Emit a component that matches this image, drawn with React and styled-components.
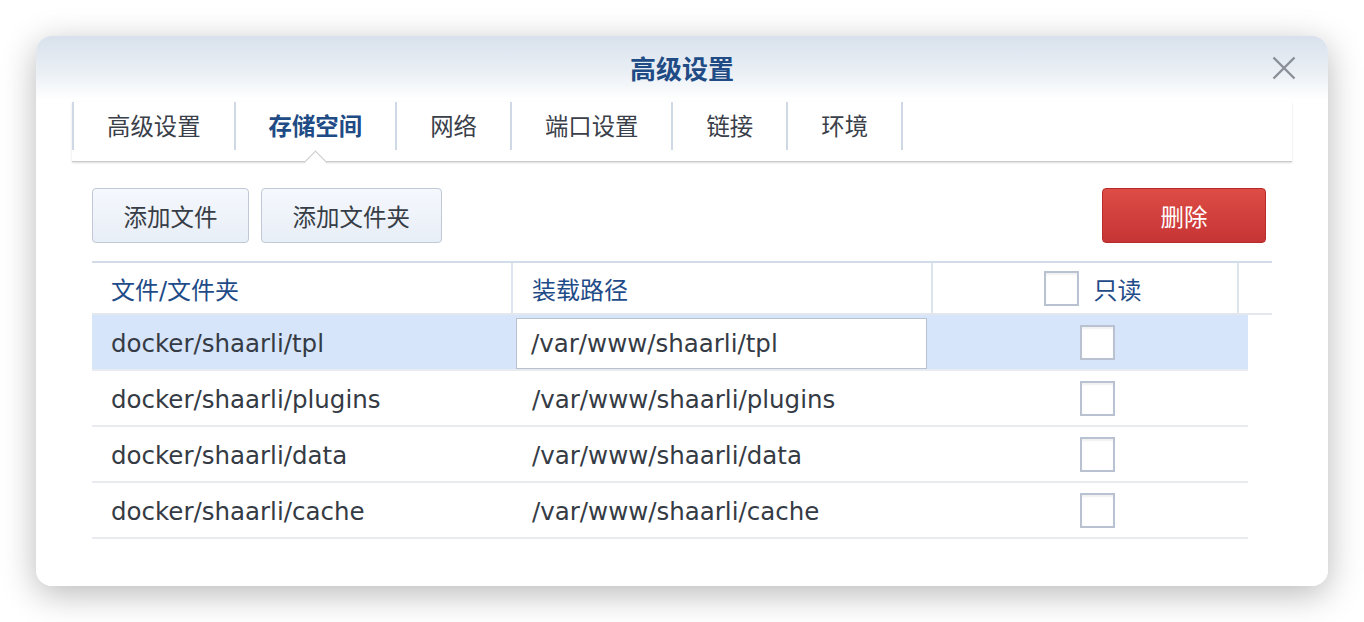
import React, { useState } from "react";
import styled, { createGlobalStyle } from "styled-components";

const tabs = ["高级设置", "存储空间", "网络", "端口设置", "链接", "环境"];

const rows = [
  { file: "docker/shaarli/tpl", mount: "/var/www/shaarli/tpl" },
  { file: "docker/shaarli/plugins", mount: "/var/www/shaarli/plugins" },
  { file: "docker/shaarli/data", mount: "/var/www/shaarli/data" },
  { file: "docker/shaarli/cache", mount: "/var/www/shaarli/cache" },
];

const App = () => {
  const [activeTab, setActiveTab] = useState(1);
  const [selected, setSelected] = useState(0);

  return (
    <Page>
      <GlobalStyle />
      <Dialog>
        <Header>
          <span />
          <Title>高级设置</Title>
          <CloseButton aria-label="close">
            <svg width="24" height="24" viewBox="0 0 24 24">
              <path
                d="M1.5 1.5 L22.5 22.5 M22.5 1.5 L1.5 22.5"
                stroke="#8a8f97"
                strokeWidth="2.4"
                fill="none"
              />
            </svg>
          </CloseButton>
        </Header>

        <TabBar>
          {tabs.map((tab, index) => (
            <Tab
              key={tab}
              $active={index === activeTab}
              $first={index === 0}
              onClick={() => setActiveTab(index)}
            >
              {tab}
            </Tab>
          ))}
        </TabBar>

        <Content>
          <Toolbar>
            <Button>添加文件</Button>
            <Button>添加文件夹</Button>
            <Spacer />
            <DangerButton>删除</DangerButton>
          </Toolbar>

          <Table>
            <HeadRow>
              <HeadCell>文件/文件夹</HeadCell>
              <HeadCell>装载路径</HeadCell>
              <HeadCell $center>
                <Checkbox />
                只读
              </HeadCell>
              <HeadCell $last />
            </HeadRow>

            {rows.map((row, index) => (
              <Row
                key={row.file}
                $selected={index === selected}
                onClick={() => setSelected(index)}
              >
                <Cell>{row.file}</Cell>
                {index === selected ? (
                  <EditCell>
                    <PathInput>{row.mount}</PathInput>
                  </EditCell>
                ) : (
                  <Cell>{row.mount}</Cell>
                )}
                <CheckCell>
                  <Checkbox />
                </CheckCell>
              </Row>
            ))}
          </Table>
        </Content>
      </Dialog>
    </Page>
  );
};

export default App;

// 스타일
const GlobalStyle = createGlobalStyle`
  html, body {
    margin: 0;
    background: #ffffff;
  }
  body {
    font-family: "DejaVu Sans", "Noto Sans CJK SC", sans-serif;
  }
`;

const Page = styled.div`
  padding: 36px;
`;

const Dialog = styled.div`
  width: 1292px;
  height: 550px;
  box-sizing: border-box;
  border-radius: 16px;
  background: linear-gradient(
    180deg,
    #d8e1ec 0px,
    #eaeff5 36px,
    #ffffff 64px,
    #ffffff 100%
  );
  box-shadow: 0 8px 34px rgba(0, 0, 0, 0.28);
  display: flex;
  flex-direction: column;
`;

const Header = styled.div`
  height: 66px;
  display: grid;
  grid-template-columns: 1fr auto 1fr;
  align-items: center;
`;

const Title = styled.div`
  font-family: "Noto Sans CJK SC", sans-serif;
  font-size: 26px;
  font-weight: bold;
  color: #214b85;
  margin-top: -4px;
`;

const CloseButton = styled.button`
  justify-self: end;
  margin-right: 32px;
  margin-top: -2px;
  width: 24px;
  height: 24px;
  padding: 0;
  border: none;
  background: none;
  display: flex;
  cursor: pointer;
`;

const TabBar = styled.div`
  margin: 0 36px;
  height: 60px;
  box-sizing: border-box;
  padding-bottom: 12px;
  display: flex;
  border-bottom: 1px solid #c9c9c9;
  box-shadow: 0 1px 2px rgba(0, 0, 0, 0.14);
`;

const Tab = styled.div`
  position: relative;
  height: 48px;
  padding: 0 33px 2px;
  box-sizing: border-box;
  display: flex;
  align-items: center;
  font-family: "Noto Sans CJK SC", sans-serif;
  font-size: 23.4px;
  color: ${({ $active }) => ($active ? "#214b85" : "#3a4049")};
  font-weight: ${({ $active }) => ($active ? "bold" : "normal")};
  border-right: 2px solid #cfd9e6;
  border-left: ${({ $first }) => ($first ? "2px solid #cfd9e6" : "none")};
  cursor: pointer;

  ${({ $active }) =>
    $active &&
    `
    &::after {
      content: "";
      position: absolute;
      left: 50%;
      bottom: -21px;
      width: 16px;
      height: 16px;
      margin-left: -8px;
      background: #ffffff;
      border-top: 1px solid #c9c9c9;
      border-left: 1px solid #c9c9c9;
      transform: rotate(45deg);
    }
  `}
`;

const Content = styled.div`
  padding: 26px 56px 0 56px;
`;

const Toolbar = styled.div`
  display: flex;
  gap: 12px;
  padding-right: 6px;
`;

const Spacer = styled.div`
  flex: 1;
`;

const Button = styled.button`
  height: 55px;
  padding: 0 30.5px;
  border: 1px solid #bfc8d4;
  border-radius: 4px;
  background: linear-gradient(180deg, #f5f8fd 0%, #e8eef7 100%);
  font-family: "Noto Sans CJK SC", sans-serif;
  font-size: 23.5px;
  color: #373d46;
  cursor: pointer;
`;

const DangerButton = styled(Button)`
  min-width: 164px;
  border-color: #b82b2b;
  background: linear-gradient(180deg, #de4c46 0%, #c63535 100%);
  color: #ffffff;
`;

const Table = styled.div`
  margin-top: 18px;
`;

const HeadRow = styled.div`
  display: grid;
  grid-template-columns: 421px 420px 306px 1fr;
  height: 54px;
  box-sizing: border-box;
  border-top: 2px solid #d2dbe8;
  border-bottom: 2px solid #e3e8ee;
`;

const HeadCell = styled.div`
  display: flex;
  align-items: center;
  justify-content: ${({ $center }) => ($center ? "center" : "flex-start")};
  gap: 15px;
  padding-left: ${({ $center }) => ($center ? "15px" : "19px")};
  border-right: ${({ $last }) => ($last ? "none" : "2px solid #dde5ef")};
  font-family: "DejaVu Sans", "Noto Sans CJK SC", sans-serif;
  font-size: 24px;
  color: #1f4c88;
`;

const Row = styled.div`
  display: grid;
  grid-template-columns: 421px 420px 1fr;
  width: 1156px;
  height: 56px;
  box-sizing: border-box;
  border-bottom: 2px solid #e8ecf0;
  background: ${({ $selected }) => ($selected ? "#d6e5fa" : "transparent")};
  cursor: default;
`;

const Cell = styled.div`
  display: flex;
  align-items: center;
  padding: 3px 0 0 19px;
  font-size: 24.5px;
  color: #353b44;
  white-space: nowrap;
`;

const EditCell = styled.div`
  display: flex;
  align-items: flex-end;
  padding-left: 3px;
`;

const PathInput = styled.div`
  width: 411px;
  height: 51px;
  box-sizing: border-box;
  padding-left: 14px;
  display: flex;
  align-items: center;
  border: 1px solid #b8c2cf;
  background: #ffffff;
  font-size: 24.5px;
  color: #353b44;
  white-space: nowrap;
`;

const CheckCell = styled.div`
  display: flex;
  align-items: center;
  justify-content: center;
  padding-left: 14px;
`;

const Checkbox = styled.span`
  display: inline-block;
  width: 35px;
  height: 35px;
  box-sizing: border-box;
  border: 2px solid #b9c2d0;
  background: #ffffff;
  box-shadow: inset 0 2px 2px rgba(0, 0, 0, 0.06);
`;
